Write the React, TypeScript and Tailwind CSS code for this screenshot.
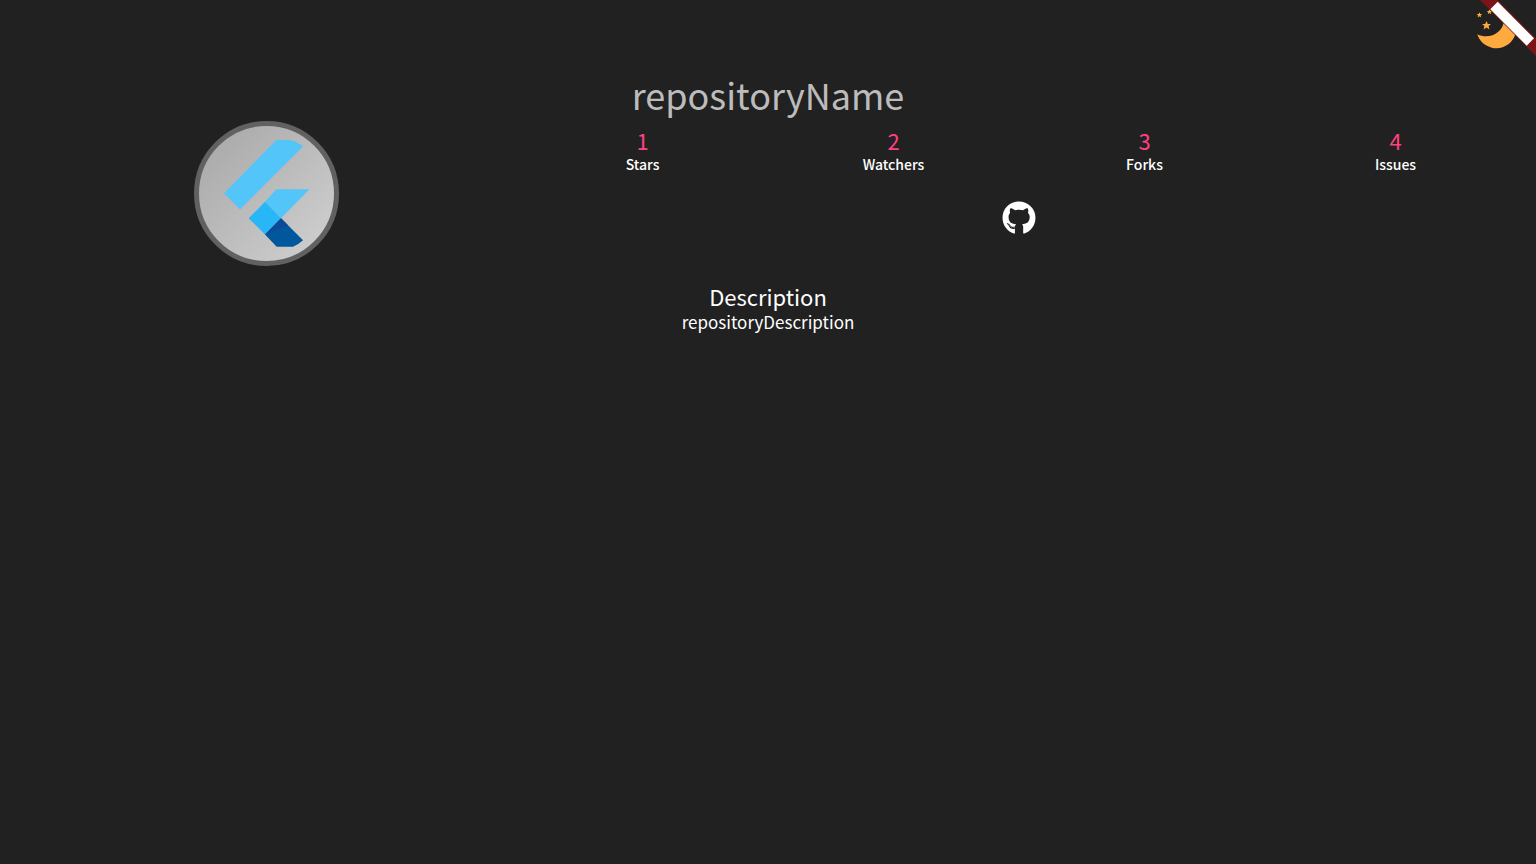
import { FaGithub } from "react-icons/fa";

const stats = [
  { value: 1, label: "Stars" },
  { value: 2, label: "Watchers" },
  { value: 3, label: "Forks" },
  { value: 4, label: "Issues" },
];

function MoonIcon() {
  return (
    <svg viewBox="0 0 48 48" className="size-12" fill="#ffaa3e" aria-hidden="true">
      <path d="M5.300 30.300C17 36 31.500 29 32 16Q32 10 30 5A20 20 0 1 1 5.300 30.300Z" />
      <path d="M14.500 17l1.300 3h3.200l-2.400 2.100.8 3.300-2.900-1.800-2.900 1.800.8-3.300L10 20h3.200z" />
      <path d="M7.400 8.200l.8 1.900h2l-1.600 1.300.6 2-1.800-1.100-1.800 1.100.6-2-1.600-1.300h2z" />
      <path d="M17.500 5l.8 1.900h2l-1.600 1.300.6 2-1.800-1.100-1.800 1.100.6-2-1.600-1.300h2z" />
    </svg>
  );
}

function FlutterLogo() {
  return (
    <svg viewBox="5 5 135 135" className="size-full" role="img" aria-label="Flutter">
      <path fill="#54c5f8" d="M82.300 19H96Q104 20.500 109 25.500L46 88.500 30 72.200Z" />
      <path fill="#54c5f8" d="M82.300 68.300H115.500L87 97.300 71 80.700Z" />
      <path fill="#29b6f6" d="M71 80.700L87 97.300 71 113.500 54.700 97.300Z" />
      <path fill="#01579b" d="M87 97.300L109 119.300Q104 124 99 125.700H82.700L71 113.500Z" />
      <path fill="#0b4a94" d="M87 97.300L94 104.300 71 113.500Z" />
    </svg>
  );
}

export default function App() {
  return (
    <div className="relative min-h-screen overflow-hidden bg-[#212121] font-['Noto_Sans_CJK_JP','Noto_Sans',sans-serif] text-white">
      <header className="flex h-14 justify-end pt-1 pr-4">
        <button type="button" aria-label="Toggle theme" className="size-12">
          <MoonIcon />
        </button>
      </header>
      <svg
        viewBox="0 0 56 56"
        className="pointer-events-none absolute top-0 right-0 size-14"
        aria-hidden="true"
      >
        <path fill="#7a1416" d="M0 0H17.500L56 38.500V56Z" />
        <path fill="#fff" d="M17.700 1.700L54 38.200 46.700 45.700 10.300 9.300Z" />
      </svg>
      <main className="px-[15px] pt-4">
        <h1 className="text-center text-4xl leading-[45px] font-normal text-[#bcbcbc]">
          repositoryName
        </h1>
        <section className="grid grid-cols-[1fr_2fr] pt-1">
          <div className="flex justify-center">
            <div className="size-[145px] overflow-hidden rounded-full border-[5px] border-[#616161] bg-linear-to-br from-[#a6a6a6] to-[#d2d2d2]">
              <FlutterLogo />
            </div>
          </div>
          <div className="pt-[5px]">
            <dl className="grid grid-cols-4 text-center">
              {stats.map(({ value, label }) => (
                <div key={label} className="flex flex-col-reverse">
                  <dt className="text-sm leading-5 font-medium">{label}</dt>
                  <dd className="text-[22px] leading-7 text-[#ff4081]">{value}</dd>
                </div>
              ))}
            </dl>
            <div className="flex justify-center pt-[27px]">
              <a href="#github" aria-label="GitHub" className="block">
                <FaGithub className="size-[34px]" />
              </a>
            </div>
          </div>
        </section>
        <section className="pt-4 text-center">
          <h2 className="text-[22px] leading-7 font-normal">Description</h2>
          <p className="text-[17px] leading-6">repositoryDescription</p>
        </section>
      </main>
    </div>
  );
}
